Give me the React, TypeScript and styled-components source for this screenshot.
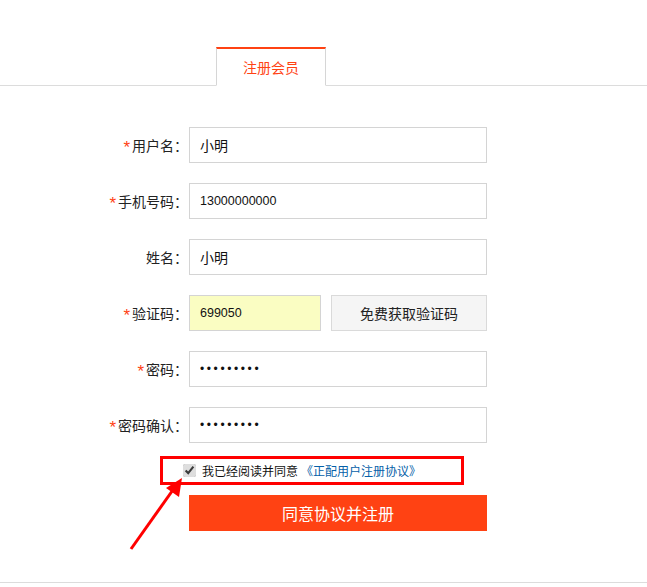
import styled, { createGlobalStyle } from 'styled-components';

const GlobalStyle = createGlobalStyle`
  html, body {
    margin: 0;
    padding: 0;
    background: #fff;
  }
  body {
    font-family: "Noto Sans CJK SC", "Liberation Sans", sans-serif;
    color: #333;
  }
`;

const Page = styled.div`
  position: relative;
  width: 647px;
  min-height: 587px;
`;

const TabBar = styled.div`
  display: flex;
  padding-top: 47px;
  padding-left: 216px;
  border-bottom: 1px solid #dcdcdc;
`;

const Tab = styled.div`
  width: 108px;
  height: 36px;
  margin-bottom: -1px;
  border: 1px solid #d6d6d6;
  border-top: 2px solid #ff4213;
  border-bottom: 1px solid #fff;
  background: #fff;
  display: flex;
  align-items: center;
  justify-content: center;
  color: #ff4213;
  font-size: 14px;
`;

const Form = styled.form`
  display: flex;
  flex-direction: column;
  gap: 20px;
  padding: 41px 0 51px;
  border-bottom: 1px solid #dcdcdc;
`;

const Row = styled.div`
  display: flex;
  align-items: center;
  height: 36px;
`;

const Label = styled.label`
  width: 188px;
  margin-right: 1px;
  text-align: right;
  font-size: 14px;
  color: #222;
  white-space: nowrap;
`;

const Star = styled.span`
  display: inline-block;
  color: #ff4213;
  font-family: "Liberation Sans", sans-serif;
  font-size: 17px;
  line-height: 0;
  margin-right: 2px;
  vertical-align: -2px;
`;

const Input = styled.input<{ $width?: number; $tint?: boolean; $latin?: boolean }>`
  box-sizing: border-box;
  width: ${(p) => p.$width ?? 298}px;
  height: 36px;
  padding: 0 10px;
  border: 1px solid #d4d4d4;
  border-radius: 0;
  outline: none;
  background: ${(p) => (p.$tint ? '#fafdc2' : '#fff')};
  color: #111;
  font-family: ${(p) =>
    p.$latin ? '"Liberation Sans", sans-serif' : '"Noto Sans CJK SC", sans-serif'};
  font-size: ${(p) => (p.$latin ? '12.5px' : '14px')};
`;

const Password = styled(Input)`
  font-family: "Liberation Sans", sans-serif;
  font-size: 12px;
  letter-spacing: 2.6px;
`;

const CodeButton = styled.button`
  box-sizing: border-box;
  width: 156px;
  height: 36px;
  margin-left: 10px;
  border: 1px solid #dadada;
  background: #f5f5f5;
  color: #222;
  font-family: "Noto Sans CJK SC", sans-serif;
  font-size: 14px;
  cursor: pointer;
`;

const AgreeBox = styled.div`
  box-sizing: border-box;
  width: 304px;
  height: 29px;
  margin: -7px 0 0 160px;
  padding-left: 20px;
  border: 3px solid #ff0000;
  display: flex;
  align-items: center;
  gap: 6px;
  font-size: 12px;
  color: #111;
`;

const Check = styled.input`
  width: 13px;
  height: 13px;
  margin: 0;
  accent-color: #dedede;
`;

const Link = styled.a`
  margin-left: 3px;
  color: #0560a8;
  text-decoration: none;
`;

const Submit = styled.button`
  width: 298px;
  height: 36px;
  margin: -10px 0 0 189px;
  border: none;
  background: #ff4213;
  color: #fff;
  font-family: "Noto Sans CJK SC", sans-serif;
  font-size: 16px;
  cursor: pointer;
`;

const Arrow = styled.svg`
  position: absolute;
  left: 120px;
  top: 470px;
  pointer-events: none;
`;

const fields = [
  { label: '用户名', required: true, value: '小明' },
  { label: '手机号码', required: true, value: '13000000000', latin: true },
  { label: '姓名', required: false, value: '小明' },
];

const App = () => {
  return (
    <Page>
      <GlobalStyle />
      <TabBar>
        <Tab>注册会员</Tab>
      </TabBar>
      <Form onSubmit={(e) => e.preventDefault()}>
        {fields.map((f) => (
          <Row key={f.label}>
            <Label>
              {f.required && <Star>*</Star>}
              {f.label}：
            </Label>
            <Input defaultValue={f.value} $latin={f.latin} />
          </Row>
        ))}
        <Row>
          <Label>
            <Star>*</Star>验证码：
          </Label>
          <Input defaultValue="699050" $width={132} $tint $latin />
          <CodeButton type="button">免费获取验证码</CodeButton>
        </Row>
        <Row>
          <Label>
            <Star>*</Star>密码：
          </Label>
          <Password type="password" defaultValue="123456789" />
        </Row>
        <Row>
          <Label>
            <Star>*</Star>密码确认：
          </Label>
          <Password type="password" defaultValue="123456789" />
        </Row>
        <AgreeBox>
          <Check type="checkbox" defaultChecked />
          <span>
            我已经阅读并同意<Link href="#">《正配用户注册协议》</Link>
          </span>
        </AgreeBox>
        <Submit type="submit">同意协议并注册</Submit>
      </Form>
      <Arrow width="70" height="85" viewBox="0 0 70 85">
        <line x1="11" y1="79" x2="55" y2="17" stroke="#ff0000" strokeWidth="3" />
        <polygon points="62,8 46,18 59,27" fill="#ff0000" />
      </Arrow>
    </Page>
  );
};

export default App;
